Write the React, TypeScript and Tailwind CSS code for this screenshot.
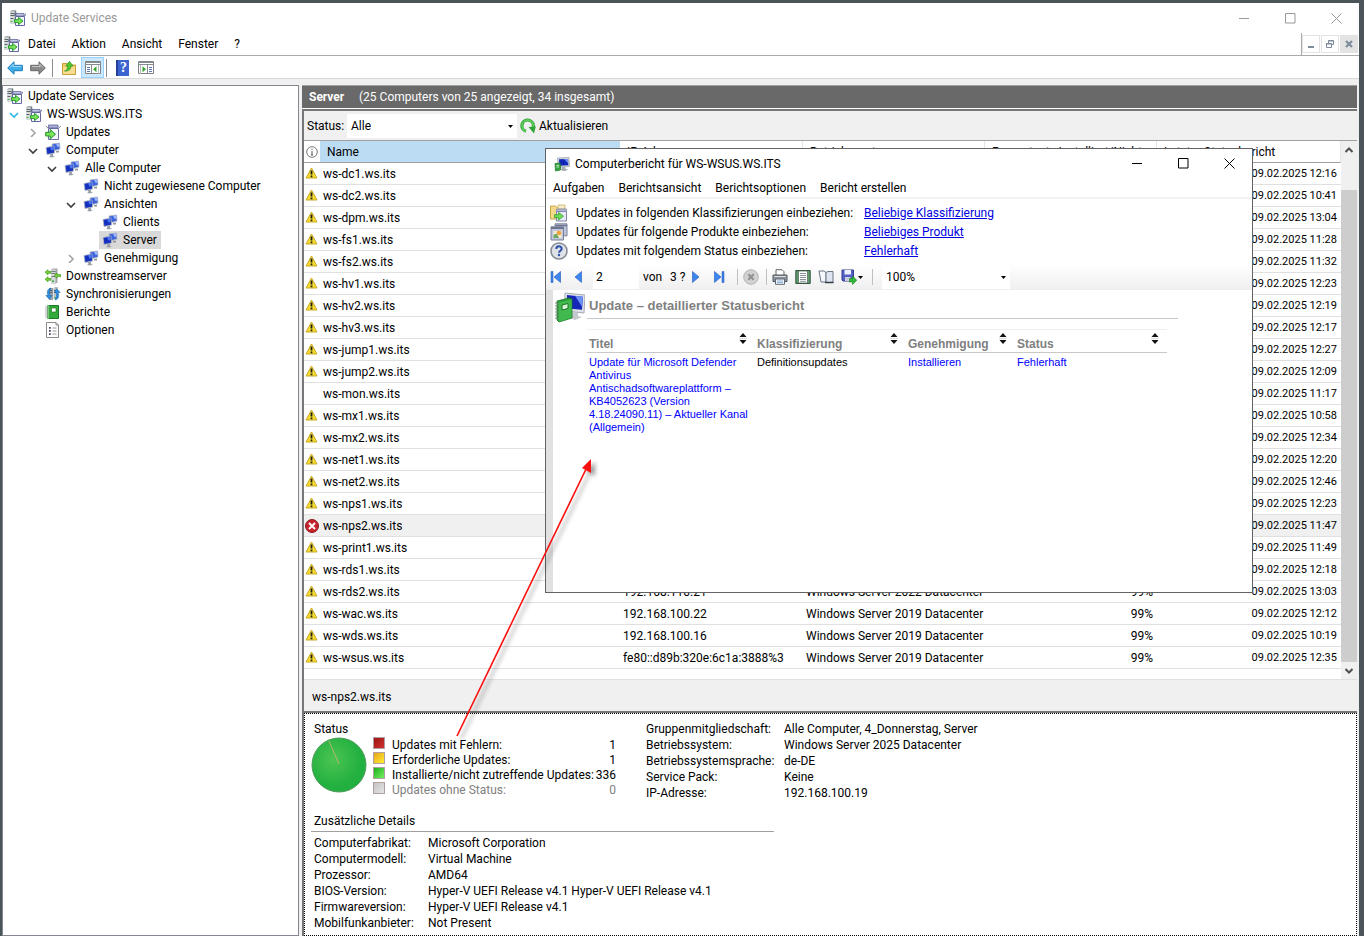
import React, { useState } from "react";
import clsx from "clsx";

type IconProps = { className?: string };

const ServicesIcon = ({ className = "h-4 w-4" }: IconProps) => (
  <svg viewBox="0 0 16 16" className={className}>
    <path d="M0 1.500 1.500 0H6l.5 1.500v12H0z" fill="#aab1b4" />
    <path d="M0 1.500h4.500v12H0z" fill="#d5dadb" />
    <path d="M.5 3.500h4M.5 5.500h4M.5 8.500h3" stroke="#5c6468" />
    <path d="M5.500 1v5" stroke="#70787c" />
    <rect x=".5" y="11" width="2" height="1" fill="#39b54a" />
    <path d="M5.500 6.500h9v9h-9z" fill="#f4f6ff" stroke="#65689c" />
    <path d="M5.500 6 4.500 4M14.500 6 16 3.500" stroke="#65689c" />
    <path d="M6 3.500h8v2.500H6z" fill="#c3c7e4" stroke="#65689c" strokeWidth=".8" />
    <path d="M4.500 9.600h4V7.300l4.500 3.700-4.500 3.700v-2.300h-4z" fill="#7be35a" stroke="#21952a" strokeWidth=".9" />
  </svg>
);

const UpdatesIcon = ({ className = "h-4 w-4" }: IconProps) => (
  <svg viewBox="0 0 16 16" className={className}>
    <path d="M3.500 4.500h10v11h-10z" fill="#f3f5ff" stroke="#6d70a3" />
    <path d="M3.500 4.500.8 2M13.500 4.500 15.800 2" stroke="#85888f" />
    <path d="M3.500 1h9.500v3H3.500z" fill="#a9aed6" stroke="#5f6395" strokeWidth=".8" />
    <path d="M.7 8.300h4.500V5.500l5.300 4.700-5.300 4.700v-2.900H.7z" fill="#7be35a" stroke="#21952a" />
  </svg>
);

const ComputersIcon = ({ className = "h-4 w-4" }: IconProps) => (
  <svg viewBox="0 0 16 16" className={className}>
    <path d="m7 2 7.500-1 .5 6-7.500 2z" fill="#3b63e0" stroke="#aeb4bd" strokeWidth=".8" />
    <path d="m11 1.700 3.200-.4.300 3.200-2 .6z" fill="#9fb8ff" />
    <path d="m11 9 3-.6v2h-3z" fill="#8f979d" />
    <path d="m1 5.500 8-1.500.6 7L2 12.500z" fill="#1531bd" stroke="#b4b9c0" strokeWidth=".8" />
    <path d="m5 5.200 3.500-.7.300 3.500-2.300.6z" fill="#4e76ee" />
    <path d="m5 12.300 3-.5v2l2 .5-3 1.300-3-.7 1.300-1z" fill="#9aa0a5" />
  </svg>
);

const DownstreamIcon = () => (
  <svg viewBox="0 0 16 16" className="h-4 w-4">
    <path d="M6 1.500 7.500.5h5v14L11 15.500H6z" fill="#a3a9ad" />
    <path d="M6 1.500h4.500v14H6z" fill="#d4d7d9" />
    <path d="M6.500 3.500h4M6.500 5.500h4M6.500 8.500h4" stroke="#71787c" />
    <rect x="7" y="12.500" width="2" height="1.500" fill="#2fb33d" />
    <path d="M0 4.200 3 1.700v1.600h3v2H3v1.600zM0 11.200l3-2.500v1.600h3v2H3v1.600zM9 7.500l3-2.600v1.700h4v2h-4v1.700z" fill="#76cf35" stroke="#3e9320" strokeWidth=".6" />
  </svg>
);

const SyncIcon = () => (
  <svg viewBox="0 0 16 16" className="h-4 w-4">
    <path d="M4 2h4v12H4z" fill="#9aa3a8" />
    <path d="M8.500 2 10 1h3v12H8.500z" fill="#b9c0c4" />
    <path d="M4.500 4.500h3M4.500 6.500h3M9 4.500h3.500M9 6.500h3.500" stroke="#5a6368" />
    <rect x="9.500" y="11" width="2" height="1.500" fill="#36b545" />
    <path d="M6 2C2.500 2.500 1.500 6 3 9.500H.8l3.500 3.800L7 9.500H5C4 7 4.500 4.500 6 2z" fill="#2f8de0" stroke="#155fa8" strokeWidth=".5" />
    <path d="M10 14c3.500-.5 4.500-4 3-7.500h2.200L11.700 2.700 9.300 6.500H11c1 2.500.5 5-1 7.500z" fill="#2f8de0" stroke="#155fa8" strokeWidth=".5" />
  </svg>
);

const ReportIcon = () => (
  <svg viewBox="0 0 16 16" className="h-4 w-4">
    <path d="M2.500 1.500h11v13h-11z" fill="#33a83b" stroke="#1b7a27" />
    <path d="M3 1.500v13" stroke="#bfe8bf" strokeDasharray="1 1" strokeWidth="2" />
    <path d="M0 3h3M0 5h3M0 7h3M0 9h3M0 11h3M0 13h3" stroke="#8a8f8a" strokeWidth=".7" />
    <path d="M6.500 4h4.500v4H6.500z" fill="#fff" stroke="#187020" strokeWidth=".6" />
  </svg>
);

const OptionsIcon = () => (
  <svg viewBox="0 0 16 16" className="h-4 w-4">
    <path d="M1.500.5h9.500l2.500 2.500v12.500h-12z" fill="#fdfdfd" stroke="#8b8b8b" />
    <path d="M11 .5V3h2.500" fill="none" stroke="#8b8b8b" />
    <path d="M4 5h1.800v1.800H4zM4 8h1.800v1.800H4zM4 11.200h1.800V13H4z" fill="#4b4b6b" />
    <path d="M7.500 6h4M7.500 9h4M7.500 12h4" stroke="#9a9a9a" />
  </svg>
);

const WarningIcon = () => (
  <svg viewBox="0 0 13 12" className="mb-[2px] h-3 w-[13px]">
    <path d="M6.500 1 12 11H1z" fill="#f8dc2c" stroke="#c9a92a" strokeLinejoin="round" />
    <path d="M6.500 3.500v4M6.500 8.500v1.700" stroke="#1d1d1d" strokeWidth="1.800" />
  </svg>
);

const ErrorIcon = () => (
  <svg viewBox="0 0 14 14" className="h-[14px] w-[14px]">
    <circle cx="7" cy="7" r="6.500" fill="#c8222c" stroke="#8c1c22" />
    <path d="m4 4 6 6m0-6-6 6" stroke="#fff" strokeWidth="2" />
  </svg>
);

const ReportMonitorIcon = () => (
  <svg viewBox="0 0 30 31" className="h-[31px] w-[30px]">
    <path d="m10 1 20 2-1 18-19-2z" fill="#dfe3e8" stroke="#a5abb3" />
    <path d="m12 3 16 1.700-1 13L12 16.500z" fill="#1427b8" />
    <path d="m20 3.800 8 .9-1 10z" fill="#6d90f5" />
    <path d="m17 20 6 1v3l4 1-7 3-5-2z" fill="#c3c8cd" />
    <path d="m2 9 12-3 3 1v19L4 30l-2-2z" fill="#2ca33a" stroke="#177226" strokeWidth=".8" />
    <path d="m4 10.500 12.500-3V26L4 29.500z" fill="#42b94e" />
    <path d="m7 13 6-1.500v5L7 18z" fill="#d8f5d8" stroke="#197526" />
    <path d="M0 11h4M0 14h4M0 17h4M0 20h4M0 23h4M0 26h4" stroke="#7d857d" strokeWidth=".9" />
  </svg>
);

const DialogIcon = () => (
  <svg viewBox="0 0 16 16" className="h-4 w-4">
    <path d="m3.500 2 11.500-.5.500 9-11 .8z" fill="#d5dae0" stroke="#979ea6" strokeWidth=".7" />
    <path d="m5 3.300 9-.4.300 6.300-8.800.5z" fill="#1126b4" />
    <path d="m10 3.100 4-.2.300 4.500z" fill="#6c8df3" />
    <path d="m8 11 3-.2.500 2 2.500.7-3 1.500-4-.5z" fill="#a5abb1" />
    <path d="M1 7.500 5.500 7l1 1v6L1.500 15z" fill="#35a540" stroke="#20702b" strokeWidth=".7" />
    <path d="M2.500 9.500h2.500M2.500 11h2.500" stroke="#d8f2d8" strokeWidth=".8" />
  </svg>
);

const ClassificationIcon = () => (
  <svg viewBox="0 0 18 18" className="h-[18px] w-[18px]">
    <path d="M.5 2h5l1.500 1.500h5V15H.5z" fill="#f3d98a" stroke="#c8a64a" />
    <path d="M8 1h7v4H8z" fill="#f8edc8" stroke="#c2a45a" strokeWidth=".7" />
    <path d="M6.500 7.500h10v9.500h-10z" fill="#e8ebf7" stroke="#7e83ab" />
    <path d="M6.500 5h10v2.500h-10z" fill="#b2b8d4" stroke="#7e83ab" strokeWidth=".7" />
    <path d="M4.500 10.700h4V8.300l5 3.900-5 3.900v-2.400h-4z" fill="#6fdc52" stroke="#27962d" strokeWidth=".7" />
  </svg>
);

const ProductIcon = () => (
  <svg viewBox="0 0 18 18" className="h-[18px] w-[18px]">
    <path d="M5 .8h12v12H5z" fill="#bfc6da" stroke="#7b819b" />
    <path d="M5.500 2.500h11.500" stroke="#6e748f" strokeWidth="1.500" />
    <path d="M1 3.800h12.500V17H1z" fill="#c3c9d8" stroke="#7b819b" />
    <path d="M1 5h12.500" stroke="#6e748f" strokeWidth="2" />
    <path d="M3.500 8h8v7h-8z" fill="#f3ead0" />
    <circle cx="9" cy="10" r="2.300" fill="#f2a23b" />
    <path d="M3.500 15v-3l3-1.500 2.500 4.500z" fill="#6aa864" />
  </svg>
);

const QuestionIcon = () => (
  <svg viewBox="0 0 18 18" className="h-[18px] w-[18px]">
    <circle cx="9" cy="9" r="8" fill="#dfe2e7" stroke="#848a92" strokeWidth="1.500" />
    <path d="M6.300 7c0-3.600 5.400-3.400 5.400-.3 0 2-2.600 2-2.600 4" fill="none" stroke="#2c50a8" strokeWidth="2" />
    <circle cx="9" cy="13" r="1.200" fill="#2c50a8" />
  </svg>
);

const ArrowIcon = ({ color, edge, flip }: { color: string; edge: string; flip?: boolean }) => (
  <svg viewBox="0 0 16 14" className={clsx("h-[14px] w-4", flip && "-scale-x-100")}>
    <path d="M.7 7 7 .8v3.500h8.300v5.400H7v3.500z" fill={color} stroke={edge} strokeLinejoin="round" />
    <path d="M3 6.500 6.200 3.300V5.500h8" fill="none" stroke="#fff" strokeOpacity=".5" />
  </svg>
);

const FolderUpIcon = () => (
  <svg viewBox="0 0 14 14" className="h-[14px] w-[14px]">
    <path d="M.5 2.500h5L7 4h6.500v9.500H.5z" fill="#edc968" stroke="#c79d3c" />
    <path d="M1 6h12v7H1z" fill="#f7dd8e" />
    <path d="M2.500 10c2-.5 3-2 3-5H3.800L7.500.3 11 5H9c0 3.500-2.500 5.500-6.500 5z" fill="#4fc534" stroke="#2a8a1c" strokeWidth=".6" />
  </svg>
);

const PaneIcon = ({ right }: { right?: boolean }) => (
  <svg viewBox="0 0 16 13" className={clsx("h-[13px] w-4", right && "-scale-x-100")}>
    <path d="M.5.5h15v12H.5z" fill="#fff" stroke="#7d8388" />
    <path d="M0 1.500h16M0 3.500h16" stroke="#868c92" />
    <path d="M6.500 4v9" stroke="#868c92" />
    <path d="M2 6.500h3M2 8.500h3M2 10.500h3" stroke="#5b78a8" />
    <path d="M11.500 5.300v6L8 8.300z" fill="#32a52e" />
    <path d="M13.500 4v9" stroke="#b4b8bc" />
  </svg>
);

const RefreshIcon = () => (
  <svg viewBox="0 0 16 16" className="h-4 w-4">
    <path d="M6 13.200A5.700 5.700 0 1 1 13.200 9" fill="none" stroke="#2c9a33" strokeWidth="3.200" />
    <path d="M6 13.200A5.700 5.700 0 1 1 13.200 9" fill="none" stroke="#5fd35a" strokeWidth="1.600" />
    <path d="m8.500 9 7.300-.5L14 15.500z" fill="#2fa336" />
  </svg>
);

const Caret = () => (
  <svg viewBox="0 0 5 3" className="h-[3px] w-[5px]">
    <path d="M0 0h5L2.500 3z" fill="#000" />
  </svg>
);

const WindowGlyph = ({ kind }: { kind: string }) => (
  <svg viewBox="0 0 11 11" className="h-[11px] w-[11px]" fill="none" stroke="currentColor">
    {kind === "min" && <path d="M0 5.500h10" />}
    {kind === "max" && <path d="M.5.5h9.500v9.500H.5z" />}
    {kind === "close" && <path d="m.5.5 10 10m0-10-10 10" />}
  </svg>
);

const WindowButtons = ({ className }: { className: string }) => (
  <div className={clsx("flex", className)}>
    {["min", "max", "close"].map((kind) => (
      <button key={kind} aria-label={kind} className="flex h-7 w-[46px] items-center justify-center">
        <WindowGlyph kind={kind} />
      </button>
    ))}
  </div>
);

const SortIcon = () => (
  <svg viewBox="0 0 8 11" className="mt-[2px] h-[11px] w-2">
    <path d="M.5 4 4 0l3.500 4zM.5 7 4 11l3.500-4z" fill="#111" />
    <path d="M0 5.500h8" stroke="#ddd" />
  </svg>
);

type TreeNode = {
  label: string;
  depth: number;
  icon: React.ReactNode;
  arrow?: "open" | "closed" | "active";
};

const tree: TreeNode[] = [
  { label: "Update Services", depth: 0, icon: <ServicesIcon /> },
  { label: "WS-WSUS.WS.ITS", depth: 1, icon: <ServicesIcon />, arrow: "active" },
  { label: "Updates", depth: 2, icon: <UpdatesIcon />, arrow: "closed" },
  { label: "Computer", depth: 2, icon: <ComputersIcon />, arrow: "open" },
  { label: "Alle Computer", depth: 3, icon: <ComputersIcon />, arrow: "open" },
  { label: "Nicht zugewiesene Computer", depth: 4, icon: <ComputersIcon /> },
  { label: "Ansichten", depth: 4, icon: <ComputersIcon />, arrow: "open" },
  { label: "Clients", depth: 5, icon: <ComputersIcon /> },
  { label: "Server", depth: 5, icon: <ComputersIcon /> },
  { label: "Genehmigung", depth: 4, icon: <ComputersIcon />, arrow: "closed" },
  { label: "Downstreamserver", depth: 2, icon: <DownstreamIcon /> },
  { label: "Synchronisierungen", depth: 2, icon: <SyncIcon /> },
  { label: "Berichte", depth: 2, icon: <ReportIcon /> },
  { label: "Optionen", depth: 2, icon: <OptionsIcon /> },
];

type Computer = {
  name: string;
  time: string;
  state?: "ok" | "error";
  ip?: string;
  os?: string;
  percent?: string;
};

const computers: Computer[] = [
  { name: "ws-dc1.ws.its", time: "12:16" },
  { name: "ws-dc2.ws.its", time: "10:41" },
  { name: "ws-dpm.ws.its", time: "13:04" },
  { name: "ws-fs1.ws.its", time: "11:28" },
  { name: "ws-fs2.ws.its", time: "11:32" },
  { name: "ws-hv1.ws.its", time: "12:23" },
  { name: "ws-hv2.ws.its", time: "12:19" },
  { name: "ws-hv3.ws.its", time: "12:17" },
  { name: "ws-jump1.ws.its", time: "12:27" },
  { name: "ws-jump2.ws.its", time: "12:09" },
  { name: "ws-mon.ws.its", time: "11:17", state: "ok" },
  { name: "ws-mx1.ws.its", time: "10:58" },
  { name: "ws-mx2.ws.its", time: "12:34" },
  { name: "ws-net1.ws.its", time: "12:20" },
  { name: "ws-net2.ws.its", time: "12:46" },
  { name: "ws-nps1.ws.its", time: "12:23" },
  { name: "ws-nps2.ws.its", time: "11:47", state: "error" },
  { name: "ws-print1.ws.its", time: "11:49" },
  { name: "ws-rds1.ws.its", time: "12:18" },
  { name: "ws-rds2.ws.its", time: "13:03", ip: "192.168.110.21", os: "Windows Server 2022 Datacenter", percent: "99%" },
  { name: "ws-wac.ws.its", time: "12:12", ip: "192.168.100.22", os: "Windows Server 2019 Datacenter", percent: "99%" },
  { name: "ws-wds.ws.its", time: "10:19", ip: "192.168.100.16", os: "Windows Server 2019 Datacenter", percent: "99%" },
  { name: "ws-wsus.ws.its", time: "12:35", ip: "fe80::d89b:320e:6c1a:3888%3", os: "Windows Server 2019 Datacenter", percent: "99%" },
];

const legend = [
  { label: "Updates mit Fehlern:", value: "1", swatch: "from-[#9c1414] to-[#d03030]", text: "text-black" },
  { label: "Erforderliche Updates:", value: "1", swatch: "from-[#e6a520] to-[#ffee30]", text: "text-black" },
  { label: "Installierte/nicht zutreffende Updates:", value: "336", swatch: "from-[#18b018] to-[#70f060]", text: "text-black" },
  { label: "Updates ohne Status:", value: "0", swatch: "from-[#c4c4c4] to-[#e4e4e4]", text: "text-[#808080]" },
];

const groupInfo = [
  ["Gruppenmitgliedschaft:", "Alle Computer, 4_Donnerstag, Server"],
  ["Betriebssystem:", "Windows Server 2025 Datacenter"],
  ["Betriebssystemsprache:", "de-DE"],
  ["Service Pack:", "Keine"],
  ["IP-Adresse:", "192.168.100.19"],
];

const hardware = [
  ["Computerfabrikat:", "Microsoft Corporation"],
  ["Computermodell:", "Virtual Machine"],
  ["Prozessor:", "AMD64"],
  ["BIOS-Version:", "Hyper-V UEFI Release v4.1 Hyper-V UEFI Release v4.1"],
  ["Firmwareversion:", "Hyper-V UEFI Release v4.1"],
  ["Mobilfunkanbieter:", "Not Present"],
];

const filters = [
  { icon: <ClassificationIcon />, label: "Updates in folgenden Klassifizierungen einbeziehen:", link: "Beliebige Klassifizierung" },
  { icon: <ProductIcon />, label: "Updates für folgende Produkte einbeziehen:", link: "Beliebiges Produkt" },
  { icon: <QuestionIcon />, label: "Updates mit folgendem Status einbeziehen:", link: "Fehlerhaft" },
];

const Chevron = ({ arrow }: { arrow: "open" | "closed" | "active" }) => (
  <svg viewBox="0 0 10 10" className="h-[10px] w-[10px]" fill="none" strokeWidth="1.700">
    {arrow === "closed" ? (
      <path d="m3 2 4 4-4 4" stroke="#a6a6a6" />
    ) : (
      <path d="m1 4 4 4 4-4" stroke={arrow === "active" ? "#2fb9ea" : "#404040"} />
    )}
  </svg>
);

const Tree = () => {
  const [selected, setSelected] = useState("Server");
  return (
    <aside className="w-[297px] shrink-0 border border-[#828790] bg-white pt-px">
      {tree.map((node) => (
        <div
          key={node.label}
          className="flex h-[18px] items-center"
          style={{ paddingLeft: node.depth === 0 ? 1 : node.depth * 19 - 18 }}
        >
          {node.depth > 0 && (
            <span className="flex w-[19px] shrink-0 justify-center">
              {node.arrow && <Chevron arrow={node.arrow} />}
            </span>
          )}
          <button
            onClick={() => setSelected(node.label)}
            className={clsx(
              "flex h-[18px] items-center gap-[5px] whitespace-nowrap pl-[3px] pr-1",
              selected === node.label && "bg-[#d9d9d9]",
            )}
          >
            {node.icon}
            {node.label}
          </button>
        </div>
      ))}
    </aside>
  );
};

const headCell = "border-r border-[#e5e5e5] pl-[7px] text-left font-normal";

const ComputerTable = () => (
  <div className="flex h-[539px] border-t border-[#a0a0a0] bg-white">
    <div className="min-w-0 flex-1">
      <table className="w-full table-fixed border-separate border-spacing-0 whitespace-nowrap">
        <colgroup>
          <col className="w-4" />
          <col />
          <col className="w-[183px]" />
          <col className="w-[182px]" />
          <col className="w-[172px]" />
          <col className="w-[184px]" />
        </colgroup>
        <thead>
          <tr className="h-[22px] [&>th]:border-b [&>th]:border-b-[#a0a0a0]">
            <th>
              <svg viewBox="0 0 12 12" className="mx-auto h-3 w-3" fill="none" stroke="#555">
                <circle cx="6" cy="6" r="5.300" strokeWidth=".8" />
                <path d="M6 5v4M6 2.800v1.200M5 9h2" />
              </svg>
            </th>
            <th className="bg-[#bcdcf4] pl-[7px] text-left font-normal">Name</th>
            <th className={headCell}>IP-Adresse</th>
            <th className={headCell}>Betriebssystem</th>
            <th className={clsx(headCell, "overflow-hidden")}>Prozentsatz Installiert/Nicht</th>
            <th className={headCell}>Letzter Statusbericht</th>
          </tr>
        </thead>
        <tbody>
          {computers.map((pc) => (
            <tr
              key={pc.name}
              className={clsx(
                "h-[22px] [&>td]:border-b [&>td]:border-[#e0e0e0]",
                pc.state === "error" && "bg-[#f0f0f0]",
              )}
            >
              <td className="pl-px">
                {pc.state === "error" ? <ErrorIcon /> : pc.state !== "ok" && <WarningIcon />}
              </td>
              <td className="pl-[3px]">{pc.name}</td>
              <td className="pl-[3px]">{pc.ip}</td>
              <td className="pl-[3px]">{pc.os}</td>
              <td className="pr-1 text-right">{pc.percent}</td>
              <td className="pr-1 text-right text-[11px]">09.02.2025 {pc.time}</td>
            </tr>
          ))}
        </tbody>
      </table>
    </div>
    <div className="flex w-4 flex-col items-center bg-[#f0f0f0]">
      <button aria-label="Nach oben" className="flex h-[49px] w-full justify-center pt-[6px]">
        <svg viewBox="0 0 8 6" className="h-[6px] w-2">
          <path d="m.5 5 3.500-3.500L7.500 5" fill="none" stroke="#505050" strokeWidth="2" />
        </svg>
      </button>
      <div className="w-full flex-1 bg-[#cdcdcd]" />
      <button aria-label="Nach unten" className="flex h-[17px] w-full items-center justify-center">
        <svg viewBox="0 0 8 6" className="h-[6px] w-2">
          <path d="M.5 1 4 4.500 7.500 1" fill="none" stroke="#505050" strokeWidth="2" />
        </svg>
      </button>
    </div>
  </div>
);

const Details = () => (
  <section className="flex-1 border border-dotted border-black bg-white pb-1 pl-[6px] pt-[7px]">
    <div className="flex">
      <div className="w-[335px]">
        <h2 className="pl-[3px] leading-4">Status</h2>
        <div className="flex">
          <svg viewBox="0 0 56 56" className="h-14 w-14">
            <defs>
              <radialGradient id="pie" cx=".4" cy=".4">
                <stop offset="0" stopColor="#4cc452" />
                <stop offset="1" stopColor="#22b040" />
              </radialGradient>
            </defs>
            <circle cx="28" cy="28" r="27" fill="url(#pie)" stroke="#4f9a5b" />
            <path d="M28 27 18 4" stroke="#b5b56a" />
          </svg>
          <ul className="ml-[6px] w-[243px]">
            {legend.map((item) => (
              <li key={item.label} className={clsx("flex h-[15px] items-center", item.text)}>
                <span className={clsx("mr-[7px] h-3 w-3 shrink-0 self-start border border-[#b0a0a0] bg-linear-to-br", item.swatch)} />
                <span className="flex-1 whitespace-nowrap">{item.label}</span>
                <span>{item.value}</span>
              </li>
            ))}
          </ul>
        </div>
      </div>
      <dl className="grid grid-cols-[138px_auto] content-start leading-4">
        {groupInfo.map(([label, value]) => (
          <React.Fragment key={label}>
            <dt>{label}</dt>
            <dd>{value}</dd>
          </React.Fragment>
        ))}
      </dl>
    </div>
    <h2 className="mt-3 w-[463px] border-b border-[#a0a0a0] pb-[2px] pl-[3px] leading-4">Zusätzliche Details</h2>
    <dl className="mt-[3px] grid grid-cols-[114px_auto] pl-[3px] leading-4">
      {hardware.map(([label, value]) => (
        <React.Fragment key={label}>
          <dt>{label}</dt>
          <dd>{value}</dd>
        </React.Fragment>
      ))}
    </dl>
  </section>
);

const NavGlyph = ({ end, flip }: { end?: boolean; flip?: boolean }) => (
  <svg viewBox="0 0 12 12" className={clsx("h-3 w-3", flip && "-scale-x-100")}>
    {end && <path d="M1 .5h2v11H1z" fill="#3c80e8" stroke="#2059b8" strokeWidth=".5" />}
    <path d="M10.500.5v11L4 6z" fill="#3f86ee" stroke="#1e55b5" strokeWidth=".6" />
  </svg>
);

const barButton = "flex h-6 items-center justify-center";
const divider = "h-4 w-px bg-[#c0c0c0]";

const ReportToolbar = () => {
  const [page, setPage] = useState("2");
  return (
    <div className="flex h-[26px] items-center bg-linear-to-b from-white to-[#efefef]">
      <button aria-label="Erste Seite" className={clsx(barButton, "w-5")}>
        <NavGlyph end />
      </button>
      <button aria-label="Vorherige Seite" className={clsx(barButton, "w-[22px]")}>
        <NavGlyph />
      </button>
      <input
        aria-label="Aktuelle Seite"
        value={page}
        onChange={(e) => setPage(e.target.value)}
        className="ml-[5px] h-6 w-[46px] bg-white pl-[3px] outline-none"
      />
      <span className="ml-1 w-[27px]">von</span>
      <span className="w-[17px] whitespace-nowrap">3 ?</span>
      <button aria-label="Nächste Seite" className={clsx(barButton, "w-5")}>
        <NavGlyph flip />
      </button>
      <button aria-label="Letzte Seite" className={clsx(barButton, "w-6")}>
        <NavGlyph end flip />
      </button>
      <span className={clsx(divider, "ml-[6px]")} />
      <button aria-label="Abbrechen" className={clsx(barButton, "ml-1 w-[18px]")}>
        <svg viewBox="0 0 16 16" className="h-4 w-4">
          <circle cx="8" cy="8" r="7.300" fill="#d2d2d2" stroke="#b5b5b5" />
          <path d="m5.300 5.300 5.400 5.400m0-5.400-5.400 5.400" stroke="#929292" strokeWidth="2.200" />
        </svg>
      </button>
      <span className={clsx(divider, "ml-[6px]")} />
      <button aria-label="Drucken" className={clsx(barButton, "w-[26px]")}>
        <svg viewBox="0 0 16 16" className="h-4 w-4">
          <path d="M4 .7h6l2 2V7H4z" fill="#fff" stroke="#666" />
          <path d="M1 6h14v6.500H1z" fill="#8d939b" stroke="#4e545c" />
          <path d="M2 7.500h12" stroke="#d7dbe0" />
          <path d="M3.500 10h9v5.300h-9z" fill="#eef5fd" stroke="#60666e" />
          <path d="M5 12h6M5 13.500h6" stroke="#6f9ac8" strokeWidth=".7" />
        </svg>
      </button>
      <button aria-label="Seitenlayout" className={clsx(barButton, "w-5")}>
        <svg viewBox="0 0 16 16" className="h-4 w-4">
          <path d="M.8 1.500h14.400v13H.8z" fill="#5e9a6c" stroke="#315240" />
          <path d="M3.500 2h9v12h-9z" fill="#fff" stroke="#48614f" strokeWidth=".7" />
          <path d="M5 4.500h6M5 6.500h6M5 8.500h6M5 10.500h6M5 12.300h6" stroke="#7b8590" strokeWidth=".9" />
        </svg>
      </button>
      <button aria-label="Seite einrichten" className={clsx(barButton, "w-[26px]")}>
        <svg viewBox="0 0 16 16" className="h-4 w-4">
          <path d="M1 2h5l2 1.500V13H3z" fill="#f4f7fb" stroke="#6c7684" />
          <path d="M8 3.500 10 2.500h5V13.500H8z" fill="#dce5f0" stroke="#6c7684" />
          <path d="M7 13.500h8.500" stroke="#333a44" strokeWidth="1.500" />
        </svg>
      </button>
      <button aria-label="Exportieren" className={clsx(barButton, "w-[25px] gap-px")}>
        <svg viewBox="0 0 16 16" className="h-4 w-4">
          <path d="M1 1h11.500v11H2L1 11z" fill="#5560c4" stroke="#343b8c" />
          <path d="M3.500 1h6.500v4.500H3.500z" fill="#eef0ff" />
          <path d="M4 8h5.500v4H4z" fill="#c9ccdf" />
          <path d="M8.500 9.500h3V7l4.300 4.300-4.300 4.200V13h-3z" fill="#33b536" stroke="#1b7f22" strokeWidth=".6" />
        </svg>
        <Caret />
      </button>
      <span className={clsx(divider, "ml-2")} />
      <div className="relative ml-[9px]">
        <select aria-label="Zoom" className="h-6 w-32 appearance-none bg-white pl-1 outline-none">
          <option>100%</option>
        </select>
        <span className="pointer-events-none absolute right-1 top-[11px]">
          <Caret />
        </span>
      </div>
    </div>
  );
};

const ReportDialog = () => (
  <div
    role="dialog"
    aria-label="Computerbericht"
    className="absolute left-[545px] top-[148px] flex h-[445px] w-[708px] flex-col border border-[#636363] bg-white"
  >
    <div className="flex h-[29px] items-center pl-2">
      <DialogIcon />
      <h1 className="ml-[5px] flex-1">Computerbericht für WS-WSUS.WS.ITS</h1>
      <WindowButtons className="text-black" />
    </div>
    <nav className="flex h-[21px] items-center gap-[14px] border-b-2 border-[#f2f2f2] pl-[7px]">
      {["Aufgaben", "Berichtsansicht", "Berichtsoptionen", "Bericht erstellen"].map((item) => (
        <button key={item}>{item}</button>
      ))}
    </nav>
    <div className="pb-1 pl-1 pt-1">
      {filters.map((f) => (
        <div key={f.link} className="flex h-[19px] items-center">
          {f.icon}
          <span className="ml-2 w-[288px] whitespace-nowrap">{f.label}</span>
          <a href="#" className="text-[#0000e0] underline">
            {f.link}
          </a>
        </div>
      ))}
    </div>
    <ReportToolbar />
    <div className="flex-1 border-l-[7px] border-[#e1e1e1] pl-[2px] pt-[2px] font-['Liberation_Sans',sans-serif]">
      <div className="flex items-start">
        <ReportMonitorIcon />
        <h2 className="ml-[2px] h-[27px] w-[591px] border-b border-[#c8c8c8] pl-[2px] pt-1 text-[13px] font-bold leading-5 text-[#808080]">
          Update – detaillierter Statusbericht
        </h2>
      </div>
      <table className="ml-8 mt-[6px] w-[580px] table-fixed border-separate border-spacing-0 text-left text-[11px] leading-[13px]">
        <colgroup>
          <col className="w-[168px]" />
          <col className="w-[151px]" />
          <col className="w-[109px]" />
          <col className="w-[152px]" />
        </colgroup>
        <thead>
          <tr className="text-[12px] text-[#808080]">
            {["Titel", "Klassifizierung", "Genehmigung", "Status"].map((title) => (
              <th key={title} className="h-6 border-b border-t border-b-[#c8c8c8] border-t-[#f0f0f0] pl-[2px] pr-2">
                <div className="flex justify-between">
                  <span className="pt-[7px]">{title}</span>
                  <SortIcon />
                </div>
              </th>
            ))}
          </tr>
        </thead>
        <tbody>
          <tr className="align-top [&>td]:pl-[2px] [&>td]:pt-[3px]">
            <td>
              <a href="#" className="block w-[160px] text-[#0000ff]">
                Update für Microsoft Defender Antivirus Antischadsoftwareplattform – KB4052623 (Version
                4.18.24090.11) – Aktueller Kanal (Allgemein)
              </a>
            </td>
            <td>Definitionsupdates</td>
            <td>
              <a href="#" className="text-[#0000ff]">Installieren</a>
            </td>
            <td>
              <a href="#" className="text-[#0000ff]">Fehlerhaft</a>
            </td>
          </tr>
        </tbody>
      </table>
    </div>
  </div>
);

const App = () => {
  return (
    <div className="relative flex min-h-screen flex-col overflow-hidden bg-[#4a5459] pl-[2px] pr-[5px] pt-[3px] font-[Roboto,'Open_Sans',sans-serif] text-[12px] leading-4 text-black">
      <div className="flex flex-1 flex-col bg-[#f0f0f0]">
        <header className="flex h-[30px] items-center bg-white pl-2">
          <ServicesIcon />
          <span className="ml-[5px] flex-1 text-[#999999]">Update Services</span>
          <WindowButtons className="text-[#999999]" />
        </header>
        <nav className="flex h-[23px] items-center border-b border-[#aaaaaa] bg-white pl-[2px]">
          <ServicesIcon />
          <div className="flex flex-1 gap-4 pl-2">
            {["Datei", "Aktion", "Ansicht", "Fenster", "?"].map((item) => (
              <button key={item}>{item}</button>
            ))}
          </div>
          <div className="flex h-full items-center gap-px border-l border-[#aaaaaa] pr-px text-[#7e8c9c]">
            <button aria-label="Minimieren" className="flex h-[18px] w-[18px] justify-center border border-[#e3e3e3] pt-[10px]">
              <svg viewBox="0 0 6 2" className="h-[2px] w-[6px]">
                <path d="M0 0h6v2H0z" fill="currentColor" />
              </svg>
            </button>
            <button aria-label="Wiederherstellen" className="flex h-[18px] w-[18px] items-center justify-center border border-[#e3e3e3]">
              <svg viewBox="0 0 8 8" className="h-2 w-2" fill="none" stroke="currentColor">
                <path d="M.5 3.500h5v4h-5zM0 4h6M2.500 3V.5h5v4H6M2 1h6" />
              </svg>
            </button>
            <button aria-label="Schließen" className="flex h-[18px] w-[18px] items-center justify-center bg-[#e3e3e3]">
              <svg viewBox="0 0 8 8" className="h-2 w-2" stroke="currentColor" strokeWidth="2.200">
                <path d="m1 1 6 6m0-6L1 7" />
              </svg>
            </button>
          </div>
        </nav>
        <div className="flex h-[23px] items-center border-b border-[#d9d9d9] bg-white pl-[5px] pt-px">
          <button aria-label="Zurück">
            <ArrowIcon color="#3eaee8" edge="#1878b8" />
          </button>
          <button aria-label="Vorwärts" className="ml-[7px]">
            <ArrowIcon color="#8b8b8b" edge="#666666" flip />
          </button>
          <span className="ml-[6px] h-[18px] w-px bg-[#8c8c8c]" />
          <button aria-label="Nach oben" className="ml-[9px]">
            <FolderUpIcon />
          </button>
          <button aria-label="Konsolenstruktur" className="ml-[5px] flex h-[21px] w-[23px] items-center justify-center border border-[#99d1ff] bg-[#cce8ff]">
            <PaneIcon />
          </button>
          <span className="ml-[2px] h-[18px] w-px bg-[#8c8c8c]" />
          <button aria-label="Hilfe" className="ml-[9px] flex h-4 w-[13px] items-center justify-center border-l-2 border-[#22409c] bg-[#3c64d0] font-['Liberation_Serif',serif] text-[14px] font-bold text-white">
            ?
          </button>
          <button aria-label="Aktionsbereich" className="ml-[9px]">
            <PaneIcon right />
          </button>
        </div>
        <main className="flex flex-1 gap-[3px] pt-[6px]">
          <Tree />
          <div className="flex min-w-0 flex-1 flex-col pr-[2px]">
            <div className="flex h-6 items-center border-b border-t border-b-white border-t-[#a0a0a0] bg-[#696969] pl-[7px] text-white">
              <h1 className="w-[50px] font-bold">Server</h1>
              <span>(25 Computers von 25 angezeigt, 34 insgesamt)</span>
            </div>
            <div className="flex flex-1 flex-col border-l-2 border-t-2 border-[#777777]">
              <div className="flex h-[29px] items-center pl-[3px]">
                <label htmlFor="status" className="w-10">
                  Status:
                </label>
                <div className="relative">
                  <select id="status" className="h-6 w-[170px] appearance-none bg-white pl-1 outline-none">
                    <option>Alle</option>
                  </select>
                  <span className="pointer-events-none absolute right-1 top-[11px]">
                    <Caret />
                  </span>
                </div>
                <button className="ml-[3px] flex items-center gap-[3px]">
                  <RefreshIcon />
                  Aktualisieren
                </button>
              </div>
              <ComputerTable />
              <div className="flex h-[34px] items-center border-b-2 border-t border-b-[#777777] border-t-[#e0e0e0] pl-2 pt-[2px]">
                ws-nps2.ws.its
              </div>
              <Details />
            </div>
          </div>
        </main>
      </div>
      <ReportDialog />
      <svg viewBox="0 0 150 290" className="pointer-events-none absolute left-[450px] top-[455px] h-[290px] w-[150px] drop-shadow-[4px_3px_2px_rgba(0,0,0,0.4)]">
        <path d="M7 281 138 10" stroke="#fa0f0f" strokeWidth="1.600" />
        <path d="m141 4-9 9 9 5z" fill="#fa0f0f" />
      </svg>
    </div>
  );
};

export default App;
